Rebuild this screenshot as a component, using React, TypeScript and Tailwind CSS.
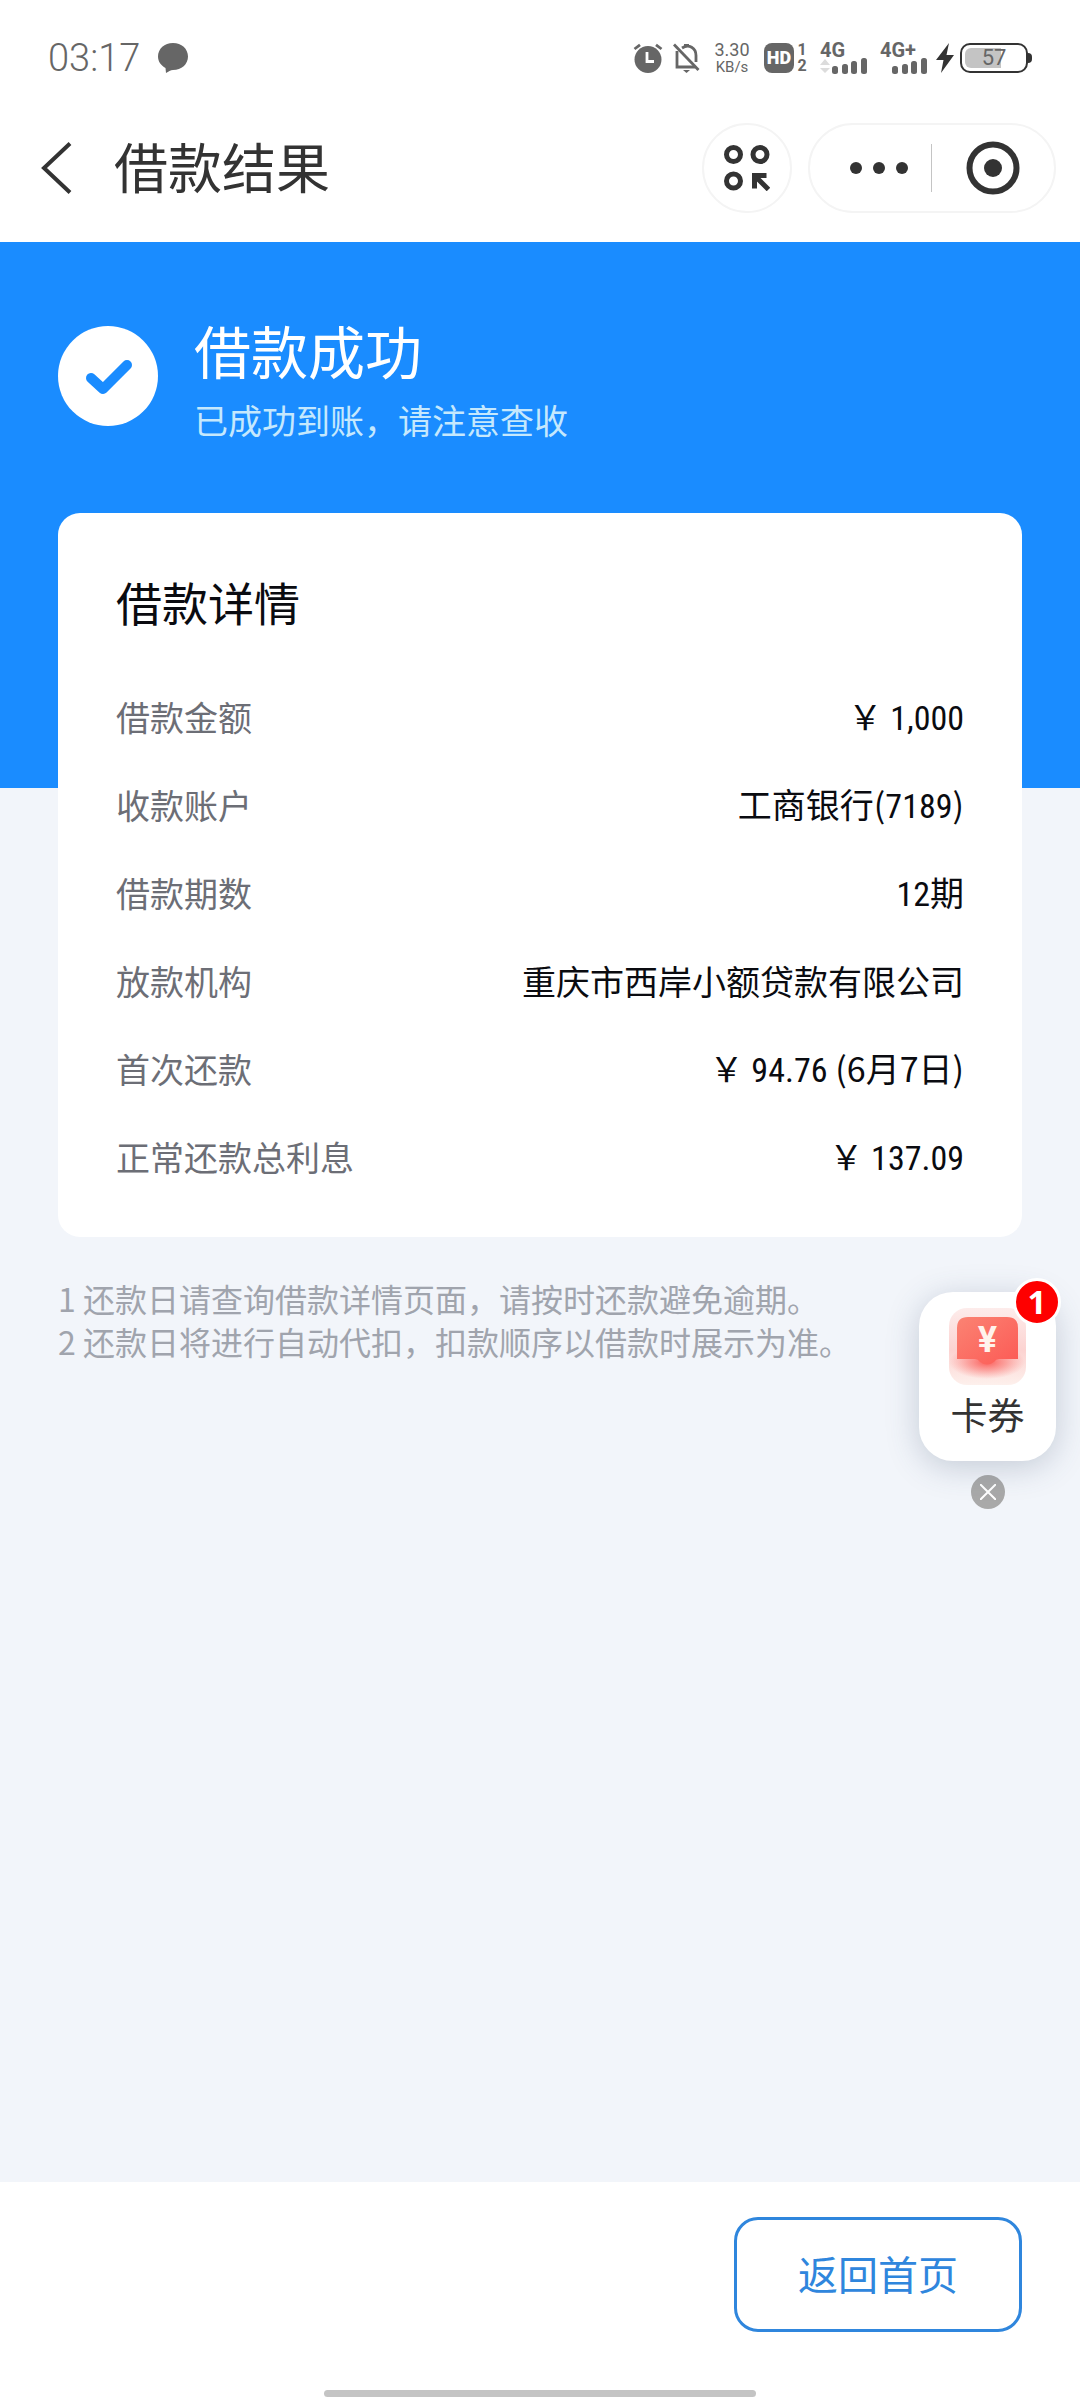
import React, { useState } from 'react';

type DetailRow = {
  label: string;
  prefix?: string;
  number?: string;
  suffix?: string;
};

const rows: DetailRow[] = [
  { label: '借款金额', prefix: '\uffe5', number: ' 1,000' },
  { label: '收款账户', prefix: '工商银行(', number: '7189', suffix: ')' },
  { label: '借款期数', number: '12', suffix: '期' },
  { label: '放款机构', prefix: '重庆市西岸小额贷款有限公司' },
  {
    label: '首次还款',
    prefix: '\uffe5',
    number: ' 94.76 ',
    suffix: '(6月7日)',
  },
  { label: '正常还款总利息', prefix: '\uffe5', number: ' 137.09' },
];

const notes = [
  '1 还款日请查询借款详情页面\uff0c请按时还款避免逾期。',
  '2 还款日将进行自动代扣\uff0c扣款顺序以借款时展示为准。',
];

const Signal: React.FC<{ label: string; arrows?: boolean }> = ({
  label,
  arrows,
}) => (
  <div className="flex w-12 flex-col">
    <span className="h-4 text-xl leading-4 font-bold">{label}</span>
    <svg viewBox="0 0 48 16" className="h-4 w-12" fill="currentColor">
      {arrows && <path d="M5 1l5 6H0zM5 15l5-5H0z" fill="#dcdcdc" />}
      <rect x="12" y="8" width="6" height="8" rx="2.5" />
      <rect x="22" y="6" width="6" height="10" rx="2.5" />
      <rect x="31" y="3" width="6" height="13" rx="2.5" />
      <rect x="41" y="0" width="6" height="16" rx="2.5" />
    </svg>
  </div>
);

const StatusBar: React.FC = () => (
  <div className="flex h-[116px] items-center justify-between px-12 font-['Roboto'] text-[#666]">
    <div className="flex items-center gap-[18px]">
      <span className="text-[38px] leading-10 font-light">03:17</span>
      <svg viewBox="0 0 30 30" className="size-[30px]" fill="currentColor">
        <path d="M15 0c8.5 0 15 5.8 15 13.5S23.5 27 15 27c-2.5.2-4.5 1.5-7 3l-.5-5C3 22.5 0 18.5 0 13.5 0 5.8 6.5 0 15 0z" />
      </svg>
    </div>
    <div className="flex items-center">
      <svg viewBox="0 0 30 30" className="mr-[10px] h-[30px] w-[30px]">
        <circle cx="15" cy="16.5" r="13.5" fill="currentColor" />
        <path
          d="M1.5 6L7 1.8M28.5 6L23 1.8"
          stroke="currentColor"
          strokeWidth="2.8"
        />
        <path d="M14 9v9.5h7" stroke="#fff" strokeWidth="2.8" fill="none" />
      </svg>
      <svg
        viewBox="0 0 27 30"
        className="mr-3 h-[30px] w-[27px]"
        fill="none"
        stroke="currentColor"
        strokeWidth="2.8"
      >
        <path d="M1 1.5l24.5 25.5" />
        <path d="M4 8v16h18M9 5c7-4.5 14 0 14 7.5V19M11 2.5h5" />
        <path d="M10 27h7l-3.5 3z" fill="currentColor" stroke="none" />
      </svg>
      <div className="mr-3 flex w-10 flex-col items-center">
        <span className="text-lg leading-[18px]">3.30</span>
        <span className="text-[15px] leading-4">KB/s</span>
      </div>
      <div className="mr-3 flex items-center gap-[2px]">
        <span className="flex h-[30px] w-[30px] items-center justify-center rounded-lg bg-[#666] text-lg font-black text-white">
          HD
        </span>
        <span className="flex w-3 flex-col text-center text-base leading-4 font-bold">
          <span>1</span>
          <span>2</span>
        </span>
      </div>
      <div className="mr-3">
        <Signal label="4G" arrows />
      </div>
      <div className="mr-2">
        <Signal label="4G+" />
      </div>
      <svg viewBox="0 0 18 30" className="mr-[6px] h-[30px] w-[18px]">
        <path d="M13 0L0 17h7.5L5 30 18 12h-7.5z" fill="#333" />
      </svg>
      <div className="flex items-center text-[#333]">
        <div className="relative flex h-[30px] w-[68px] items-center justify-center rounded-[10px] border-2 border-[#333]">
          <span className="absolute top-[3px] left-[3px] h-5 w-9 rounded-l-md bg-[#c4c4c4]" />
          <span className="relative text-[22px] leading-6 text-[#666]">57</span>
        </div>
        <span className="h-[10px] w-1 rounded-r bg-[#333]" />
      </div>
    </div>
  </div>
);

const NavBar: React.FC = () => (
  <header className="flex h-[126px] items-center pr-6 pb-[22px] pl-10 text-[#333]">
    <button aria-label="返回" className="mr-[42px]">
      <svg viewBox="0 0 32 52" className="h-[52px] w-8" fill="none">
        <path d="M30 1.5L4 26l26 24.5" stroke="currentColor" strokeWidth="4" />
      </svg>
    </button>
    <h1 className="flex-1 pb-1 text-[54px] leading-[60px]">借款结果</h1>
    <button
      aria-label="小程序"
      className="mr-4 flex size-[90px] items-center justify-center rounded-full border-2 border-[#f4f4f4]"
    >
      <svg viewBox="0 0 46 46" className="size-[46px]" fill="none">
        <g stroke="currentColor" strokeWidth="5">
          <circle cx="9.5" cy="9.5" r="7" />
          <circle cx="36" cy="9.5" r="7" />
          <circle cx="9.5" cy="36" r="7" />
          <path d="M42.5 30.5H30.5V43.5M30.5 30.5l14 14" />
        </g>
      </svg>
    </button>
    <div className="flex h-[90px] w-[248px] items-center rounded-full border-2 border-[#f4f4f4]">
      <button
        aria-label="更多"
        className="flex h-12 w-[122px] items-center justify-center border-r border-[#c4c4c4] pl-4"
      >
        <svg viewBox="0 0 58 12" className="h-3 w-[58px]" fill="currentColor">
          <circle cx="6" cy="6" r="6" />
          <circle cx="29" cy="6" r="6" />
          <circle cx="52" cy="6" r="6" />
        </svg>
      </button>
      <button
        aria-label="关闭"
        className="flex w-[122px] items-center justify-center"
      >
        <svg viewBox="0 0 54 54" className="size-[54px]">
          <circle
            cx="27"
            cy="27"
            r="23.5"
            fill="none"
            stroke="currentColor"
            strokeWidth="6"
          />
          <circle cx="27" cy="27" r="9" fill="currentColor" />
        </svg>
      </button>
    </div>
  </header>
);

const CouponIcon: React.FC = () => (
  <div className="relative flex size-[77px] justify-center">
    <svg viewBox="0 0 77 77" className="absolute inset-0 size-full">
      <defs>
        <linearGradient id="plate" x1="0" y1="0" x2="0" y2="1">
          <stop offset="0" stopColor="#fdeceb" />
          <stop offset="0.55" stopColor="#fcd3d1" />
          <stop offset="1" stopColor="#fdf0ec" />
        </linearGradient>
        <linearGradient id="flap" x1="0" y1="0" x2="1" y2="1">
          <stop offset="0" stopColor="#fb8373" />
          <stop offset="1" stopColor="#fc5a55" />
        </linearGradient>
        <radialGradient id="glow">
          <stop offset="0" stopColor="#fb5c58" />
          <stop offset="0.5" stopColor="#fb7a76" stopOpacity="0.6" />
          <stop offset="1" stopColor="#fb8a86" stopOpacity="0" />
        </radialGradient>
      </defs>
      <rect width="77" height="77" rx="18" fill="url(#plate)" />
      <ellipse cx="38" cy="54" rx="38" ry="17" fill="url(#glow)" />
      <path
        d="M8 51V20Q8 9 19 9H58Q69 9 69 20V51H50Q47 51 45 54Q38 59 31 54Q29 51 26 51Z"
        fill="url(#flap)"
      />
    </svg>
    <span className="relative mt-4 font-['Roboto'] text-[36px] leading-8 font-bold text-[#fff3ec]">
      ¥
    </span>
  </div>
);

const CouponFloat: React.FC<{ onClose: () => void }> = ({ onClose }) => (
  <aside className="absolute top-[1292px] right-6 flex flex-col items-center">
    <a
      href="#coupons"
      className="relative flex h-[169px] w-[137px] flex-col items-center rounded-[34px] bg-white pt-4 text-[#333] shadow-[0_6px_32px_rgba(60,80,110,0.25)]"
    >
      <CouponIcon />
      <span className="mt-[6px] text-[37px] leading-[46px]">卡券</span>
      <span className="absolute -top-[14px] -right-[5px] flex size-12 items-center justify-center rounded-full border-3 border-white bg-[#fe0000] font-['Noto_Sans'] text-[33px] leading-8 font-bold text-white">
        1
      </span>
    </a>
    <button
      aria-label="关闭卡券"
      onClick={onClose}
      className="mt-[14px] flex size-[34px] items-center justify-center rounded-full bg-[#a9a9a9]"
    >
      <svg viewBox="0 0 16 16" className="size-4" stroke="#fff" strokeWidth="2">
        <path d="M0 0l16 16M16 0L0 16" />
      </svg>
    </button>
  </aside>
);

const App: React.FC = () => {
  const [showCoupon, setShowCoupon] = useState<boolean>(true);

  return (
    <div className="relative flex min-h-screen flex-col bg-[#f2f5fa] font-['Noto_Sans_CJK_SC',sans-serif]">
      <div className="bg-white">
        <StatusBar />
        <NavBar />
      </div>

      <main className="flex-1">
        {/* Result banner, the card below overlaps its lower half */}
        <section className="flex items-start gap-9 bg-[#1a8cff] px-[58px] pt-[72px] pb-[336px]">
          <svg viewBox="0 0 100 100" className="mt-3 size-[100px]">
            <circle cx="50" cy="50" r="50" fill="#fff" />
            <path
              d="M33 52L45 63L69 39"
              fill="none"
              stroke="#1a8cff"
              strokeWidth="10"
              strokeLinecap="round"
              strokeLinejoin="round"
            />
          </svg>
          <div className="pb-[7px] text-white">
            <h2 className="text-[57px] leading-[70px]">借款成功</h2>
            <p className="mt-[11px] text-[34px] leading-[50px] text-[#c5e8fd]">
              {'已成功到账\uff0c请注意查收'}
            </p>
          </div>
        </section>

        <section className="relative mx-[58px] -mt-[275px] rounded-[22px] bg-white px-[58px] pt-[58px] pb-9">
          <h3 className="mb-[42px] text-[46px] leading-[60px] text-[#0a0b10]">
            借款详情
          </h3>
          <dl>
            {rows.map((row) => (
              <div
                key={row.label}
                className="flex h-[88px] items-center justify-between text-[34px] leading-[50px]"
              >
                <dt className="text-[#6c6e76]">{row.label}</dt>
                <dd className="whitespace-pre text-[#0a0b10]">
                  {row.prefix}
                  {row.number && (
                    <span className="font-['Liberation_Sans_Narrow','Roboto_Condensed','Roboto']">
                      {row.number}
                    </span>
                  )}
                  {row.suffix}
                </dd>
              </div>
            ))}
          </dl>
        </section>

        <div className="mx-[58px] mt-10 text-[32px] leading-[43px] text-[#a0a4ad]">
          {notes.map((note) => (
            <p key={note}>{note}</p>
          ))}
        </div>
      </main>

      {showCoupon && <CouponFloat onClose={() => setShowCoupon(false)} />}

      <footer className="flex flex-col items-end bg-white px-[58px] pt-[35px] pb-[3px]">
        <button className="h-[115px] w-72 rounded-3xl border-3 border-[#2f86dd] pb-1 text-[40px] text-[#2f86dd]">
          返回首页
        </button>
        <div className="mt-[58px] h-[7px] w-[432px] self-center rounded-full bg-[#c4c4c4]" />
      </footer>
    </div>
  );
};

export default App;
